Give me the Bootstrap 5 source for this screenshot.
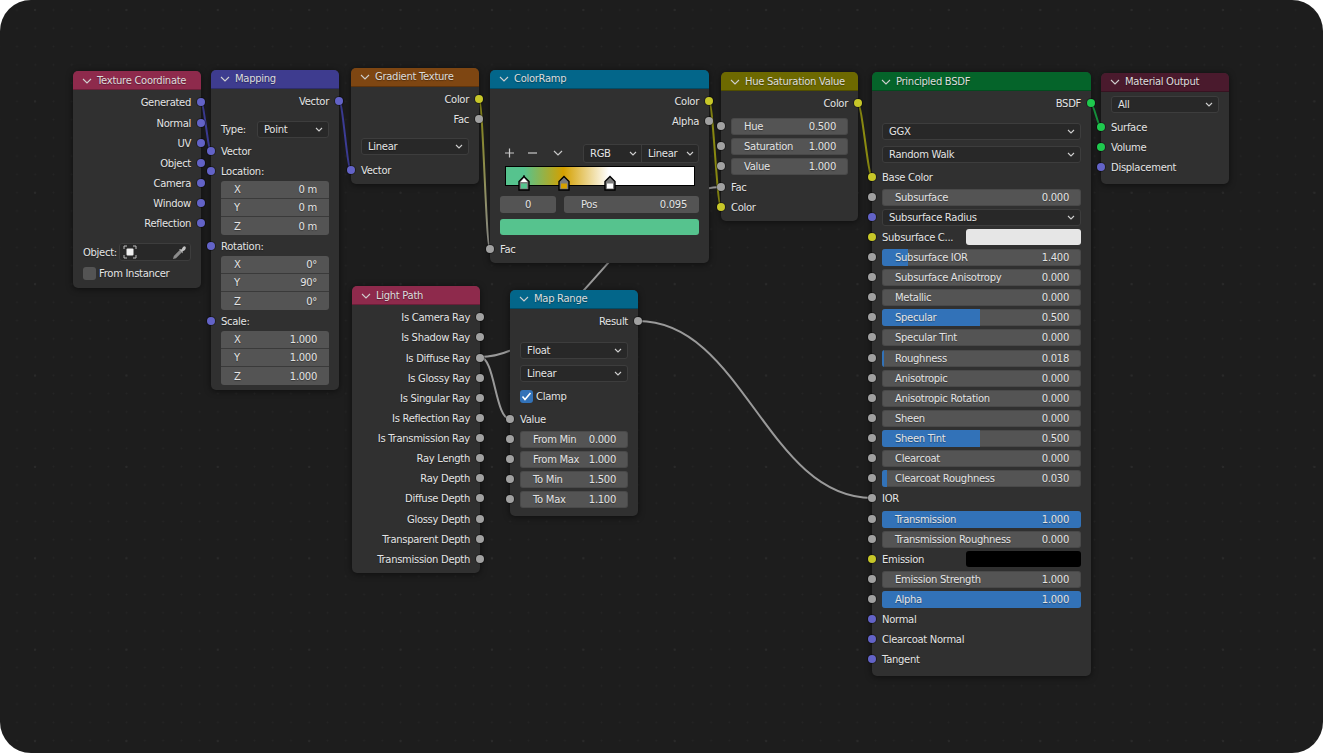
<!DOCTYPE html>
<html lang="en">
<head>
<meta charset="utf-8">
<title>Shader nodes</title>
<link href="https://cdn.jsdelivr.net/npm/bootstrap@5.3.0/dist/css/bootstrap.min.css" rel="stylesheet">
<style>
html,body{height:100%;background:#fff;overflow:hidden}
.app{width:1323px;height:753px;border-radius:31px;position:relative;overflow:hidden;background-color:#1d1d1d;
background-image:radial-gradient(circle at center,#2a2a2a 0 1px,transparent 1.4px),radial-gradient(circle at center,#252525 0 .8px,transparent 1.1px);background-size:91.4px 91.4px,18.28px 18.28px;background-position:-10.7px -35.7px,7.86px .86px;
font-family:"DejaVu Sans",sans-serif;font-size:10px;letter-spacing:-.3px;color:#e4e4e4;text-shadow:0 1px 1px rgba(0,0,0,.35)}
.wires{position:absolute;left:0;top:0}
.nd{position:absolute;width:128px;background:#303030;border-radius:5px;box-shadow:0 1px 6px rgba(0,0,0,.55)}
.nw{width:219px}
.n-tc{left:73px;top:71px}.n-map{left:211px;top:70px}.n-gr{left:351px;top:68px}.n-cr{left:490px;top:70px}
.n-hsv{left:721px;top:72px;width:137px}.n-pb{left:872px;top:72px}.n-mo{left:1101px;top:73px}
.n-lp{left:352px;top:286px}.n-mr{left:510px;top:290px}
.nh{height:19px;border-radius:5px 5px 0 0;padding-left:9px;gap:5px;color:#dcdcdc;box-shadow:inset 0 -1px 0 rgba(0,0,0,.25)}
.nh svg{flex:none}
.nh-up{padding-bottom:2px}
.hr-tex{background:#8e2a4c}.hr-vec{background:#3e3c8f}.hr-grd{background:#7e4612}.hr-cnv{background:#03668a}
.hr-col{background:#6d6900}.hr-shd{background:#05642a}.hr-out{background:#4a1a2d}
.rw{position:relative;height:20px;padding:0 10px}
.pb4{padding-bottom:4px}.pb5{padding-bottom:5px}.pb6{padding-bottom:6px}.pb7{padding-bottom:7px}
.g1{margin-top:1px}.g2{margin-top:2px}.g3{margin-top:3px}.g4{margin-top:4px}.g8{margin-top:8px}.g9{margin-top:9px}.g10{margin-top:10px}.g12{margin-top:12px}
.sk{position:absolute;top:50%;width:8px;height:8px;margin-top:-4px;border-radius:50%;box-shadow:0 0 0 1px rgba(0,0,0,.35)}
.sl{left:-4px}.sr{right:-4px}
.sv{background:#6363c7}.sy{background:#c7c729}.sg{background:#a1a1a1}.ss{background:#1fc94e}
.fld{position:relative;height:17px;background:#545454;border-radius:3px;padding:0 12px 0 13px;overflow:hidden;box-shadow:inset 0 0 0 1px rgba(0,0,0,.12)}
.fld span{position:relative}
.fil{position:absolute;left:0;top:0;bottom:0;background:#3272b8}
.dd{height:17px;background:#282828;border:1px solid #3d3d3d;border-radius:3px;padding:0 5px 0 6px}
.dd svg{flex:none}
.up1{margin-top:-2px}
.grp{margin:0 10px;border-radius:3px;overflow:hidden}
.gi{height:18px;background:#545454;padding:0 12px 0 13px;border-bottom:1px solid #3a3a3a}
.gi:last-child{border-bottom:0}
.lbl-w{width:36px}
.obj{width:72px;height:18px;background:#282828;border:1px solid #3d3d3d;border-radius:3px;padding:0 3px}
.objl{width:36px}
.cb{width:13px;height:13px;border-radius:3px;background:#545454;margin-right:3px}
.cb-on{background:#3272b8}
.ramp{position:relative;margin-left:15px;width:190px;height:20px;border:1px solid #000;
background:linear-gradient(90deg,#56c38e 0 9.5%,#d4a000 30.5%,#fff 54.7%,#fff)}
.handles{position:absolute;left:-2px;top:8px;overflow:visible}
.tools{width:84px;margin-left:-4px}
.pair{width:116px;height:19px;background:#282828;border:1px solid #3d3d3d;border-radius:3px}
.pair>div{padding:0 4px 0 6px}
.pair>div+div{border-left:1px solid #3d3d3d}
.f0{width:56px;height:17px;background:#545454;border-radius:3px}
.f1{width:135px;height:17px;background:#545454;border-radius:3px;padding:0 12px 0 17px}
.swg{height:16px;background:#56c38e;border-radius:3px}
.swl{width:115px;height:16px;background:#e6e6e6;border-radius:3px}
.swk{width:115px;height:16px;background:#000;border-radius:3px}
.swlbl{width:84px}
</style>
</head>
<body>
<svg width="0" height="0" class="position-absolute"><defs>
<symbol id="hc" viewBox="0 0 10 6"><polyline points="1,1 5,5 9,1" fill="none" stroke="#cfcfcf" stroke-width="1.1"/></symbol>
<symbol id="dc" viewBox="0 0 8 5"><polyline points="1,1 4,4 7,1" fill="none" stroke="#d0d0d0" stroke-width="1.1"/></symbol>
<linearGradient id="wg" gradientUnits="userSpaceOnUse" x1="479" y1="99" x2="490" y2="249"><stop offset="0" stop-color="#8f8f12"/><stop offset="1" stop-color="#9a9a9a"/></linearGradient>
</defs></svg>
<div class="app">
<svg class="wires" width="1323" height="753" fill="none" stroke-width="2" stroke-linecap="round">
<path d="M201 102C204 102 208 151 211 151" stroke="#3f3f9c"/>
<path d="M339 101C343 101 347 170 351 170" stroke="#3f3f9c"/>
<path d="M479 99C483 99 486 249 490 249" stroke="url(#wg)"/>
<path d="M709 101C713 101 717 207 721 207" stroke="#8f8f12"/>
<path d="M858 104C862 104 868 177 872 177" stroke="#8f8f12"/>
<path d="M1091 104C1094 104 1098 127 1101 127" stroke="#179a40"/>
<path d="M480 357C570 357 630 187 721 187" stroke="#9a9a9a"/>
<path d="M480 357C495 357 495 419 510 419" stroke="#9a9a9a"/>
<path d="M638 321C743 321 767 498 872 498" stroke="#9a9a9a"/>
</svg>

<div class="nd n-tc pb5">
<div class="nh hr-tex d-flex align-items-center"><svg width="10" height="6"><use href="#hc"/></svg>Texture Coordinate</div>
<div class="rw g2 d-flex align-items-center justify-content-end">Generated<i class="sk sr sv"></i></div>
<div class="rw g1 d-flex align-items-center justify-content-end">Normal<i class="sk sr sv"></i></div>
<div class="rw d-flex align-items-center justify-content-end">UV<i class="sk sr sv"></i></div>
<div class="rw d-flex align-items-center justify-content-end">Object<i class="sk sr sv"></i></div>
<div class="rw d-flex align-items-center justify-content-end">Camera<i class="sk sr sv"></i></div>
<div class="rw d-flex align-items-center justify-content-end">Window<i class="sk sr sv"></i></div>
<div class="rw d-flex align-items-center justify-content-end">Reflection<i class="sk sr sv"></i></div>
<div class="rw g9 d-flex align-items-center"><span class="objl">Object:</span>
<div class="obj d-flex align-items-center justify-content-between">
<svg width="14" height="14" viewBox="0 0 14 14"><path d="M1 4V1H4M10 1H13V4M13 10V13H10M4 13H1V10" fill="none" stroke="#bdbdbd" stroke-width="1"/><rect x="3.500" y="3.500" width="7" height="7" rx="1" fill="#f0f0f0"/></svg>
<svg width="15" height="15" viewBox="0 0 15 15"><path d="M1 14L1.800 11L8 4.800L10.200 7L4 13.200Z" fill="#8c8c8c"/><path d="M7 4L9.500 4.500L11 2Q12.500 .8 13.500 1.800T13 5L10.500 6.500L11 8.500Z" fill="#c2c2c2"/></svg>
</div></div>
<div class="rw g1 d-flex align-items-center"><i class="cb"></i>From Instancer</div>
</div>

<div class="nd n-map pb5">
<div class="nh nh-up hr-vec d-flex align-items-center"><svg width="10" height="6"><use href="#hc"/></svg>Mapping</div>
<div class="rw g2 d-flex align-items-center justify-content-end">Vector<i class="sk sr sv"></i></div>
<div class="rw g8 d-flex align-items-center"><span class="lbl-w flex-shrink-0">Type:</span><div class="dd flex-grow-1 d-flex align-items-center justify-content-between">Point<svg width="8" height="5"><use href="#dc"/></svg></div></div>
<div class="rw g2 d-flex align-items-center">Vector<i class="sk sl sv"></i></div>
<div class="rw d-flex align-items-center">Location:<i class="sk sl sv"></i></div>
<div class="grp">
<div class="gi d-flex align-items-center justify-content-between"><span>X</span><span>0 m</span></div>
<div class="gi d-flex align-items-center justify-content-between"><span>Y</span><span>0 m</span></div>
<div class="gi d-flex align-items-center justify-content-between"><span>Z</span><span>0 m</span></div>
</div>
<div class="rw g1 d-flex align-items-center">Rotation:<i class="sk sl sv"></i></div>
<div class="grp">
<div class="gi d-flex align-items-center justify-content-between"><span>X</span><span>0°</span></div>
<div class="gi d-flex align-items-center justify-content-between"><span>Y</span><span>90°</span></div>
<div class="gi d-flex align-items-center justify-content-between"><span>Z</span><span>0°</span></div>
</div>
<div class="rw g1 d-flex align-items-center">Scale:<i class="sk sl sv"></i></div>
<div class="grp">
<div class="gi d-flex align-items-center justify-content-between"><span>X</span><span>1.000</span></div>
<div class="gi d-flex align-items-center justify-content-between"><span>Y</span><span>1.000</span></div>
<div class="gi d-flex align-items-center justify-content-between"><span>Z</span><span>1.000</span></div>
</div>
</div>

<div class="nd n-gr pb4">
<div class="nh nh-up hr-grd d-flex align-items-center"><svg width="10" height="6"><use href="#hc"/></svg>Gradient Texture</div>
<div class="rw g2 d-flex align-items-center justify-content-end">Color<i class="sk sr sy"></i></div>
<div class="rw d-flex align-items-center justify-content-end">Fac<i class="sk sr sg"></i></div>
<div class="rw g8 d-flex align-items-center"><div class="dd up1 flex-grow-1 d-flex align-items-center justify-content-between">Linear<svg width="8" height="5"><use href="#dc"/></svg></div></div>
<div class="rw g3 d-flex align-items-center">Vector<i class="sk sl sv"></i></div>
</div>

<div class="nd nw n-cr pb4">
<div class="nh nh-up hr-cnv d-flex align-items-center"><svg width="10" height="6"><use href="#hc"/></svg>ColorRamp</div>
<div class="rw g2 d-flex align-items-center justify-content-end">Color<i class="sk sr sy"></i></div>
<div class="rw d-flex align-items-center justify-content-end">Alpha<i class="sk sr sg"></i></div>
<div class="rw g12 d-flex align-items-center justify-content-between">
<div class="tools d-flex align-items-center">
<svg width="23" height="12" viewBox="0 0 23 12"><path d="M9 6H18M13.500 1.500V10.500" stroke="#c8c8c8" stroke-width="1.200"/></svg>
<svg width="23" height="12" viewBox="0 0 23 12"><path d="M9 6H18" stroke="#c8c8c8" stroke-width="1.200"/></svg>
<svg width="23" height="12" viewBox="0 0 23 12"><path d="M12 4L16 8L20 4" fill="none" stroke="#c8c8c8" stroke-width="1.200"/></svg>
</div>
<div class="pair d-flex">
<div class="w-50 d-flex align-items-center justify-content-between">RGB<svg width="8" height="5"><use href="#dc"/></svg></div>
<div class="w-50 d-flex align-items-center justify-content-between">Linear<svg width="8" height="5"><use href="#dc"/></svg></div>
</div></div>
<div class="ramp g3">
<svg class="handles" width="194" height="18" viewBox="0 0 194 18">
<line x1="20" y1="0" x2="20" y2="7" stroke="#000" stroke-dasharray="2 1"/>
<path d="M20 1.500L25 6.500V15H15V6.500Z" fill="#7c7c7c" stroke="#000" stroke-width="1.400"/><path d="M20 3L23.500 7H16.500Z" fill="#fff"/><rect x="17" y="8.500" width="6" height="5" fill="#56c38e"/>
<path d="M60 1.500L65 6.500V15H55V6.500Z" fill="#7c7c7c" stroke="#000" stroke-width="1.400"/><rect x="57" y="8.500" width="6" height="5" fill="#d4a000"/>
<path d="M106 1.500L111 6.500V15H101V6.500Z" fill="#7c7c7c" stroke="#000" stroke-width="1.400"/><rect x="103" y="8.500" width="6" height="5" fill="#fff"/>
</svg>
</div>
<div class="rw g8 d-flex align-items-center justify-content-between">
<div class="f0 d-flex align-items-center justify-content-center">0</div>
<div class="f1 d-flex align-items-center justify-content-between"><span>Pos</span><span>0.095</span></div>
</div>
<div class="rw g3 d-flex align-items-center"><div class="swg flex-grow-1"></div></div>
<div class="rw g2 d-flex align-items-center">Fac<i class="sk sl sg"></i></div>
</div>

<div class="nd n-hsv pb4">
<div class="nh hr-col d-flex align-items-center"><svg width="10" height="6"><use href="#hc"/></svg>Hue Saturation Value</div>
<div class="rw g2 d-flex align-items-center justify-content-end">Color<i class="sk sr sy"></i></div>
<div class="rw g3 d-flex align-items-center"><div class="fld flex-grow-1 d-flex align-items-center justify-content-between"><span>Hue</span><span>0.500</span></div><i class="sk sl sg"></i></div>
<div class="rw d-flex align-items-center"><div class="fld flex-grow-1 d-flex align-items-center justify-content-between"><span>Saturation</span><span>1.000</span></div><i class="sk sl sg"></i></div>
<div class="rw d-flex align-items-center"><div class="fld flex-grow-1 d-flex align-items-center justify-content-between"><span>Value</span><span>1.000</span></div><i class="sk sl sg"></i></div>
<div class="rw g1 d-flex align-items-center">Fac<i class="sk sl sg"></i></div>
<div class="rw d-flex align-items-center">Color<i class="sk sl sy"></i></div>
</div>

<div class="nd nw n-pb pb7">
<div class="nh hr-shd d-flex align-items-center"><svg width="10" height="6"><use href="#hc"/></svg>Principled BSDF</div>
<div class="rw g2 d-flex align-items-center justify-content-end">BSDF<i class="sk sr ss"></i></div>
<div class="rw g8 d-flex align-items-center"><div class="dd flex-grow-1 d-flex align-items-center justify-content-between">GGX<svg width="8" height="5"><use href="#dc"/></svg></div></div>
<div class="rw g3 d-flex align-items-center"><div class="dd flex-grow-1 d-flex align-items-center justify-content-between">Random Walk<svg width="8" height="5"><use href="#dc"/></svg></div></div>
<div class="rw g3 d-flex align-items-center">Base Color<i class="sk sl sy"></i></div>
<div class="rw d-flex align-items-center"><div class="fld flex-grow-1 d-flex align-items-center justify-content-between"><span>Subsurface</span><span>0.000</span></div><i class="sk sl sg"></i></div>
<div class="rw d-flex align-items-center"><div class="dd flex-grow-1 d-flex align-items-center justify-content-between">Subsurface Radius<svg width="8" height="5"><use href="#dc"/></svg></div><i class="sk sl sv"></i></div>
<div class="rw d-flex align-items-center justify-content-between"><span class="swlbl">Subsurface C...</span><div class="swl"></div><i class="sk sl sy"></i></div>
<div class="rw d-flex align-items-center"><div class="fld flex-grow-1 d-flex align-items-center justify-content-between"><b class="fil" style="width:13%"></b><span>Subsurface IOR</span><span>1.400</span></div><i class="sk sl sg"></i></div>
<div class="rw d-flex align-items-center"><div class="fld flex-grow-1 d-flex align-items-center justify-content-between"><span>Subsurface Anisotropy</span><span>0.000</span></div><i class="sk sl sg"></i></div>
<div class="rw d-flex align-items-center"><div class="fld flex-grow-1 d-flex align-items-center justify-content-between"><span>Metallic</span><span>0.000</span></div><i class="sk sl sg"></i></div>
<div class="rw d-flex align-items-center"><div class="fld flex-grow-1 d-flex align-items-center justify-content-between"><b class="fil" style="width:49%"></b><span>Specular</span><span>0.500</span></div><i class="sk sl sg"></i></div>
<div class="rw d-flex align-items-center"><div class="fld flex-grow-1 d-flex align-items-center justify-content-between"><span>Specular Tint</span><span>0.000</span></div><i class="sk sl sg"></i></div>
<div class="rw g1 d-flex align-items-center"><div class="fld flex-grow-1 d-flex align-items-center justify-content-between"><b class="fil" style="width:1%"></b><span>Roughness</span><span>0.018</span></div><i class="sk sl sg"></i></div>
<div class="rw d-flex align-items-center"><div class="fld flex-grow-1 d-flex align-items-center justify-content-between"><span>Anisotropic</span><span>0.000</span></div><i class="sk sl sg"></i></div>
<div class="rw d-flex align-items-center"><div class="fld flex-grow-1 d-flex align-items-center justify-content-between"><span>Anisotropic Rotation</span><span>0.000</span></div><i class="sk sl sg"></i></div>
<div class="rw d-flex align-items-center"><div class="fld flex-grow-1 d-flex align-items-center justify-content-between"><span>Sheen</span><span>0.000</span></div><i class="sk sl sg"></i></div>
<div class="rw d-flex align-items-center"><div class="fld flex-grow-1 d-flex align-items-center justify-content-between"><b class="fil" style="width:49%"></b><span>Sheen Tint</span><span>0.500</span></div><i class="sk sl sg"></i></div>
<div class="rw d-flex align-items-center"><div class="fld flex-grow-1 d-flex align-items-center justify-content-between"><span>Clearcoat</span><span>0.000</span></div><i class="sk sl sg"></i></div>
<div class="rw d-flex align-items-center"><div class="fld flex-grow-1 d-flex align-items-center justify-content-between"><b class="fil" style="width:2.5%"></b><span>Clearcoat Roughness</span><span>0.030</span></div><i class="sk sl sg"></i></div>
<div class="rw d-flex align-items-center">IOR<i class="sk sl sg"></i></div>
<div class="rw g1 d-flex align-items-center"><div class="fld flex-grow-1 d-flex align-items-center justify-content-between"><b class="fil" style="width:100%"></b><span>Transmission</span><span>1.000</span></div><i class="sk sl sg"></i></div>
<div class="rw d-flex align-items-center"><div class="fld flex-grow-1 d-flex align-items-center justify-content-between"><span>Transmission Roughness</span><span>0.000</span></div><i class="sk sl sg"></i></div>
<div class="rw d-flex align-items-center justify-content-between"><span class="swlbl">Emission</span><div class="swk"></div><i class="sk sl sy"></i></div>
<div class="rw d-flex align-items-center"><div class="fld flex-grow-1 d-flex align-items-center justify-content-between"><span>Emission Strength</span><span>1.000</span></div><i class="sk sl sg"></i></div>
<div class="rw d-flex align-items-center"><div class="fld flex-grow-1 d-flex align-items-center justify-content-between"><b class="fil" style="width:100%"></b><span>Alpha</span><span>1.000</span></div><i class="sk sl sg"></i></div>
<div class="rw d-flex align-items-center">Normal<i class="sk sl sv"></i></div>
<div class="rw d-flex align-items-center">Clearcoat Normal<i class="sk sl sv"></i></div>
<div class="rw d-flex align-items-center">Tangent<i class="sk sl sv"></i></div>
</div>

<div class="nd n-mo pb7">
<div class="nh nh-up hr-out d-flex align-items-center"><svg width="10" height="6"><use href="#hc"/></svg>Material Output</div>
<div class="rw g3 d-flex align-items-center"><div class="dd up1 flex-grow-1 d-flex align-items-center justify-content-between">All<svg width="8" height="5"><use href="#dc"/></svg></div></div>
<div class="rw g2 d-flex align-items-center">Surface<i class="sk sl ss"></i></div>
<div class="rw d-flex align-items-center">Volume<i class="sk sl ss"></i></div>
<div class="rw d-flex align-items-center">Displacement<i class="sk sl sv"></i></div>
</div>

<div class="nd n-lp pb4">
<div class="nh hr-tex d-flex align-items-center"><svg width="10" height="6"><use href="#hc"/></svg>Light Path</div>
<div class="rw g2 d-flex align-items-center justify-content-end">Is Camera Ray<i class="sk sr sg"></i></div>
<div class="rw d-flex align-items-center justify-content-end">Is Shadow Ray<i class="sk sr sg"></i></div>
<div class="rw g1 d-flex align-items-center justify-content-end">Is Diffuse Ray<i class="sk sr sg"></i></div>
<div class="rw d-flex align-items-center justify-content-end">Is Glossy Ray<i class="sk sr sg"></i></div>
<div class="rw d-flex align-items-center justify-content-end">Is Singular Ray<i class="sk sr sg"></i></div>
<div class="rw d-flex align-items-center justify-content-end">Is Reflection Ray<i class="sk sr sg"></i></div>
<div class="rw d-flex align-items-center justify-content-end">Is Transmission Ray<i class="sk sr sg"></i></div>
<div class="rw d-flex align-items-center justify-content-end">Ray Length<i class="sk sr sg"></i></div>
<div class="rw d-flex align-items-center justify-content-end">Ray Depth<i class="sk sr sg"></i></div>
<div class="rw d-flex align-items-center justify-content-end">Diffuse Depth<i class="sk sr sg"></i></div>
<div class="rw g1 d-flex align-items-center justify-content-end">Glossy Depth<i class="sk sr sg"></i></div>
<div class="rw d-flex align-items-center justify-content-end">Transparent Depth<i class="sk sr sg"></i></div>
<div class="rw d-flex align-items-center justify-content-end">Transmission Depth<i class="sk sr sg"></i></div>
</div>

<div class="nd n-mr pb7">
<div class="nh nh-up hr-cnv d-flex align-items-center"><svg width="10" height="6"><use href="#hc"/></svg>Map Range</div>
<div class="rw g2 d-flex align-items-center justify-content-end">Result<i class="sk sr sg"></i></div>
<div class="rw g9 d-flex align-items-center"><div class="dd flex-grow-1 d-flex align-items-center justify-content-between">Float<svg width="8" height="5"><use href="#dc"/></svg></div></div>
<div class="rw g3 d-flex align-items-center"><div class="dd flex-grow-1 d-flex align-items-center justify-content-between">Linear<svg width="8" height="5"><use href="#dc"/></svg></div></div>
<div class="rw g3 d-flex align-items-center"><i class="cb cb-on d-flex align-items-center justify-content-center"><svg width="11" height="9" viewBox="0 0 11 9"><polyline points="1.500,4.500 4,7.500 9.500,1" fill="none" stroke="#fff" stroke-width="1.600"/></svg></i>Clamp</div>
<div class="rw g3 d-flex align-items-center">Value<i class="sk sl sg"></i></div>
<div class="rw d-flex align-items-center"><div class="fld flex-grow-1 d-flex align-items-center justify-content-between"><span>From Min</span><span>0.000</span></div><i class="sk sl sg"></i></div>
<div class="rw d-flex align-items-center"><div class="fld flex-grow-1 d-flex align-items-center justify-content-between"><span>From Max</span><span>1.000</span></div><i class="sk sl sg"></i></div>
<div class="rw d-flex align-items-center"><div class="fld flex-grow-1 d-flex align-items-center justify-content-between"><span>To Min</span><span>1.500</span></div><i class="sk sl sg"></i></div>
<div class="rw d-flex align-items-center"><div class="fld flex-grow-1 d-flex align-items-center justify-content-between"><span>To Max</span><span>1.100</span></div><i class="sk sl sg"></i></div>
</div>
</div>
<script src="https://cdn.jsdelivr.net/npm/bootstrap@5.3.0/dist/js/bootstrap.bundle.min.js"></script>
</body>
</html>
